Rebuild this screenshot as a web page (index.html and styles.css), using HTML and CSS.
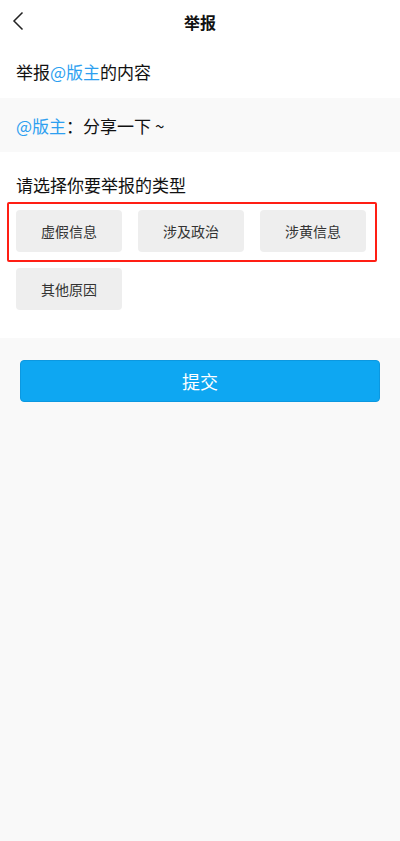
FILE: index.html
```html
<!DOCTYPE html>
<html lang="zh">
<head>
<meta charset="utf-8">
<link rel="stylesheet" href="styles.css">
</head>
<body>
<div class="page">
  <header class="nav">
    <svg class="back" width="12" height="20" viewBox="0 0 12 20"><path d="M10.5 1.5 L2 10 L10.5 18.5" fill="none" stroke="#222" stroke-width="1.5"/></svg>
    <div class="title">举报</div>
  </header>
  <div class="label first">举报<span class="at">@版主</span>的内容</div>
  <div class="quote"><span class="at">@版主</span>：分享一下 ~</div>
  <section class="types">
    <div class="label">请选择你要举报的类型</div>
    <div class="hl">
      <div class="row">
        <div class="tag">虚假信息</div>
        <div class="tag">涉及政治</div>
        <div class="tag">涉黄信息</div>
      </div>
    </div>
    <div class="row row2">
      <div class="tag">其他原因</div>
    </div>
  </section>
  <div class="bottom">
    <button class="submit">提交</button>
  </div>
</div>
</body>
</html>
```

FILE: styles.css
```css
* { box-sizing: border-box; }
html, body { margin: 0; padding: 0; }
body {
  font-family: "Noto Sans CJK SC", "Noto Sans", sans-serif;
  color: #111;
  background: #f9f9f9;
  width: 400px;
  height: 841px;
  overflow: hidden;
}
.page { display: flex; flex-direction: column; height: 841px; }
.nav {
  height: 44px;
  background: #fff;
  display: flex;
  align-items: center;
  justify-content: center;
  position: relative;
}
.back { position: absolute; left: 12px; top: 11px; }
.title { font-size: 16px; font-weight: 700; line-height: 20px; }
.label {
  font-size: 17px;
  line-height: 22px;
  padding: 0 16px;
}
.first { background: #fff; height: 54px; padding-top: 17px; }
.at { color: #2d9ff0; }
.quote {
  background: #f9f9f9;
  height: 54px;
  display: flex;
  align-items: center;
  padding: 0 16px;
  font-size: 17px;
}
.types { background: #fff; padding-top: 22px; padding-bottom: 28px; }
.types .label { margin-bottom: 6px; }
.hl {
  margin-left: 7px;
  width: 370px;
  border: 2px solid #ff1e14;
  border-radius: 2px;
  padding: 6px 0 8px 7px;
}
.row { display: flex; gap: 16px; }
.row2 { padding-left: 16px; margin-top: 6px; }
.tag {
  width: 106px;
  height: 42px;
  background: #eeeeee;
  border-radius: 4px;
  display: flex;
  align-items: center;
  justify-content: center;
  font-size: 14px;
  color: #333;
}
.bottom { flex: 1; background: #f9f9f9; padding: 22px 20px 0; }
.submit {
  width: 360px;
  height: 42px;
  border: 1px solid #0c98e0;
  border-radius: 4px;
  background: #0ea7f2;
  color: #fff;
  font-family: "Noto Sans CJK SC", sans-serif;
  font-size: 18px;
  padding: 0;
}
```
